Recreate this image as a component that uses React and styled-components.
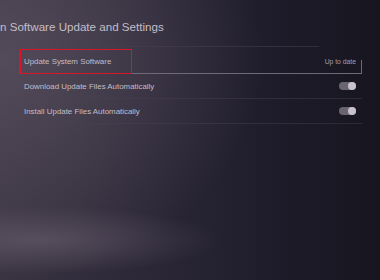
import React from "react";
import styled, { createGlobalStyle } from "styled-components";

const Global = createGlobalStyle`
  html, body { margin: 0; padding: 0; }
  body {
    width: 380px;
    height: 280px;
    overflow: hidden;
    font-family: "Liberation Sans", Arial, sans-serif;
  }
`;

const Screen = styled.div`
  position: relative;
  width: 380px;
  height: 280px;
  overflow: hidden;
  background:
    radial-gradient(ellipse 180px 34px at 40px 240px, rgba(115, 104, 120, 0.5), rgba(115, 104, 120, 0) 100%),
    radial-gradient(ellipse 260px 220px at 0px 60px, rgba(95, 85, 100, 0.7), rgba(95, 85, 100, 0) 100%),
    linear-gradient(90deg, #3a3442 0%, #2b2737 40%, #1d1b29 75%, #17161f 100%);
  display: flex;
  flex-direction: column;
`;

const Title = styled.h1`
  margin: 0;
  padding: 20px 0 0 0;
  height: 28px;
  box-sizing: border-box;
  font-size: 11.6px;
  font-weight: 400;
  color: #c4bdc8;
  white-space: nowrap;
  line-height: 14px;
`;

const List = styled.div`
  margin: 18px 0 0 19px;
  width: 343px;
  display: flex;
  flex-direction: column;
`;

const Divider = styled.div`
  height: 1px;
  width: 300px;
  margin-bottom: 2px;
  background: rgba(70, 66, 84, 0.5);
`;

const Row = styled.div`
  position: relative;
  display: flex;
  align-items: stretch;
  height: 25px;
  box-sizing: border-box;
  border-bottom: 1px solid rgba(70, 66, 84, 0.45);
`;

const FocusRow = styled(Row)`
  border-bottom-color: #6e6a78;
  &::after {
    content: "";
    position: absolute;
    right: 0;
    bottom: 0;
    width: 1px;
    height: 13px;
    background: #6e6a78;
  }
`;

const Label = styled.div`
  display: flex;
  align-items: center;
  box-sizing: border-box;
  padding-left: 5px;
  font-size: 7.9px;
  color: #c3bdc7;
  white-space: nowrap;
`;

const FocusLabel = styled(Label)`
  width: 113px;
  padding-left: 5px;
`;

const FocusFrame = styled.div`
  position: absolute;
  left: 0;
  top: 0;
  width: 113px;
  height: 25px;
  box-sizing: border-box;
  border: 1px solid rgb(220, 20, 40);
  border-left-width: 2px;
  pointer-events: none;
  z-index: 2;
`;

const Value = styled.div`
  flex: 1;
  display: flex;
  align-items: center;
  justify-content: flex-end;
  padding-right: 6px;
  font-size: 6.8px;
  color: #a39dab;
`;

const Track = styled.div`
  position: relative;
  width: 17px;
  height: 8px;
  border-radius: 4px;
  background: #6a6470;
`;

const Thumb = styled.div`
  position: absolute;
  right: 0.5px;
  top: 0;
  width: 8px;
  height: 8px;
  border-radius: 50%;
  background: #c9c2cd;
`;

const Toggle = () => (
  <Track>
    <Thumb />
  </Track>
);

export default function App() {
  return (
    <>
      <Global />
      <Screen>
        <Title>n Software Update and Settings</Title>
        <List>
          <Divider />
          <FocusRow>
            <FocusLabel>Update System Software</FocusLabel>
            <Value>Up to date</Value>
            <FocusFrame />
          </FocusRow>
          <Row>
            <Label>Download Update Files Automatically</Label>
            <Value>
              <Toggle />
            </Value>
          </Row>
          <Row>
            <Label>Install Update Files Automatically</Label>
            <Value>
              <Toggle />
            </Value>
          </Row>
        </List>
      </Screen>
    </>
  );
}
